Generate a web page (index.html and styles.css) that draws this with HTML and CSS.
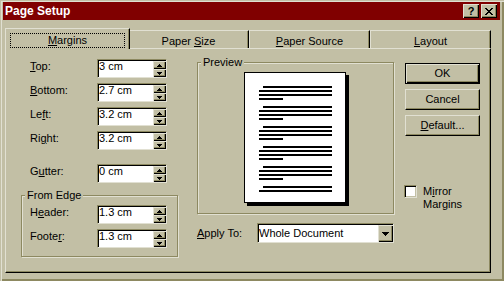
FILE: index.html
```html
<!DOCTYPE html>
<html lang="en">
<head>
  <meta charset="UTF-8" />
  <meta name="viewport" content="width=device-width, initial-scale=1.0" />
  <title>Page Setup</title>
  <link rel="stylesheet" href="styles.css">
</head>
<body>
  <div class="window">
    <div class="titlebar">
      <span class="title">Page Setup</span>
      <button class="cap-btn">?</button>
      <button class="cap-btn">
        <svg width="8" height="7" viewBox="0 0 8 7"><path d="M0 0h2v1H0zM6 0h2v1H6zM1 1h2v1H1zM5 1h2v1H5zM2 2h4v1H2zM3 3h2v1H3zM2 4h4v1H2zM1 5h2v1H1zM5 5h2v1H5zM0 6h2v1H0zM6 6h2v1H6z"/></svg>
      </button>
    </div>

    <div class="tabs">
      <div class="tab active"><span class="focus"><u>M</u>argins</span></div>
      <div class="tab">Paper <u>S</u>ize</div>
      <div class="tab"><u>P</u>aper Source</div>
      <div class="tab"><u>L</u>ayout</div>
    </div>

    <div class="panel">
      <div class="fields">
        <div class="row">
          <label><u>T</u>op:</label>
          <div class="field"><span class="value">3 cm</span>
            <div class="spin">
              <span class="spin-btn"><svg width="5" height="3"><path d="M2 0h1v1h1v1h1v1H0V2h1V1h1z"/></svg></span>
              <span class="spin-btn"><svg width="5" height="3"><path d="M0 0h5v1H4v1H3v1H2V2H1V1H0z"/></svg></span>
            </div>
          </div>
        </div>
        <div class="row">
          <label><u>B</u>ottom:</label>
          <div class="field"><span class="value">2.7 cm</span>
            <div class="spin">
              <span class="spin-btn"><svg width="5" height="3"><path d="M2 0h1v1h1v1h1v1H0V2h1V1h1z"/></svg></span>
              <span class="spin-btn"><svg width="5" height="3"><path d="M0 0h5v1H4v1H3v1H2V2H1V1H0z"/></svg></span>
            </div>
          </div>
        </div>
        <div class="row">
          <label>Le<u>f</u>t:</label>
          <div class="field"><span class="value">3.2 cm</span>
            <div class="spin">
              <span class="spin-btn"><svg width="5" height="3"><path d="M2 0h1v1h1v1h1v1H0V2h1V1h1z"/></svg></span>
              <span class="spin-btn"><svg width="5" height="3"><path d="M0 0h5v1H4v1H3v1H2V2H1V1H0z"/></svg></span>
            </div>
          </div>
        </div>
        <div class="row">
          <label>Ri<u>g</u>ht:</label>
          <div class="field"><span class="value">3.2 cm</span>
            <div class="spin">
              <span class="spin-btn"><svg width="5" height="3"><path d="M2 0h1v1h1v1h1v1H0V2h1V1h1z"/></svg></span>
              <span class="spin-btn"><svg width="5" height="3"><path d="M0 0h5v1H4v1H3v1H2V2H1V1H0z"/></svg></span>
            </div>
          </div>
        </div>
        <div class="row gutter">
          <label>G<u>u</u>tter:</label>
          <div class="field"><span class="value">0 cm</span>
            <div class="spin">
              <span class="spin-btn"><svg width="5" height="3"><path d="M2 0h1v1h1v1h1v1H0V2h1V1h1z"/></svg></span>
              <span class="spin-btn"><svg width="5" height="3"><path d="M0 0h5v1H4v1H3v1H2V2H1V1H0z"/></svg></span>
            </div>
          </div>
        </div>

        <fieldset class="group edge">
          <legend>From Edge</legend>
          <div class="row">
            <label>H<u>e</u>ader:</label>
            <div class="field"><span class="value">1.3 cm</span>
              <div class="spin">
                <span class="spin-btn"><svg width="5" height="3"><path d="M2 0h1v1h1v1h1v1H0V2h1V1h1z"/></svg></span>
                <span class="spin-btn"><svg width="5" height="3"><path d="M0 0h5v1H4v1H3v1H2V2H1V1H0z"/></svg></span>
              </div>
            </div>
          </div>
          <div class="row">
            <label>Foote<u>r</u>:</label>
            <div class="field"><span class="value">1.3 cm</span>
              <div class="spin">
                <span class="spin-btn"><svg width="5" height="3"><path d="M2 0h1v1h1v1h1v1H0V2h1V1h1z"/></svg></span>
                <span class="spin-btn"><svg width="5" height="3"><path d="M0 0h5v1H4v1H3v1H2V2H1V1H0z"/></svg></span>
              </div>
            </div>
          </div>
        </fieldset>
      </div>

      <div class="preview-col">
        <fieldset class="group preview">
          <legend>Preview</legend>
          <div class="page">
            <div class="para"><i class="ln indent"></i><i class="ln"></i><i class="ln"></i><i class="ln short"></i></div>
            <div class="para"><i class="ln indent"></i><i class="ln"></i><i class="ln"></i><i class="ln short"></i></div>
            <div class="para"><i class="ln indent"></i><i class="ln"></i><i class="ln"></i><i class="ln short"></i></div>
            <div class="para"><i class="ln indent"></i><i class="ln"></i><i class="ln"></i><i class="ln short"></i></div>
            <div class="para"><i class="ln indent"></i><i class="ln"></i><i class="ln"></i><i class="ln short"></i></div>
            <div class="para"><i class="ln indent"></i><i class="ln"></i></div>
          </div>
        </fieldset>
        <div class="apply">
          <label><u>A</u>pply To:</label>
          <div class="combo">
            <span class="value">Whole Document</span>
            <span class="drop"><svg width="7" height="4"><path d="M0 0h7v1H6v1H5v1H4v1H3V3H2V2H1V1H0z"/></svg></span>
          </div>
        </div>
      </div>

      <div class="actions">
        <button class="btn default">OK</button>
        <button class="btn">Cancel</button>
        <button class="btn"><u>D</u>efault...</button>
        <div class="check">
          <span class="box"></span>
          <span>M<u>i</u>rror<br>Margins</span>
        </div>
      </div>
    </div>
  </div>
</body>
</html>
```

FILE: styles.css
```css
* {
  box-sizing: border-box;
}
html, body {
  margin: 0;
  background: #c2bfa5;
}
body {
  font-family: "Liberation Sans", Arial, sans-serif;
  font-size: 11px;
  line-height: 13px;
  color: #000;
}
u {
  text-decoration: underline;
  text-underline-offset: 1px;
}
svg {
  display: block;
  shape-rendering: crispEdges;
}

/* window frame */
.window {
  width: 504px;
  height: 281px;
  padding: 2px 4px 0 3px;
  background: #c2bfa5;
  box-shadow: inset 1px 1px 0 #c2bfa5, inset 2px 2px 0 #e1e0d2, inset -2px -2px 0 #8d8961;
}
.titlebar {
  display: flex;
  align-items: center;
  gap: 2px;
  height: 18px;
  padding: 0 3px 0 2px;
  background: #800000;
}
.title {
  flex: 1;
  color: #fff;
  font-weight: bold;
  font-size: 12px;
  line-height: 18px;
}
.cap-btn {
  display: flex;
  align-items: center;
  justify-content: center;
  width: 16px;
  height: 14px;
  padding: 0;
  border: 0;
  background: #c2bfa5;
  box-shadow: inset 1px 1px 0 #e1e0d2, inset -1px -1px 0 #000, inset -2px -2px 0 #8d8961;
  font: bold 11px/14px "Liberation Sans", Arial, sans-serif;
  color: #000;
}

/* tabs */
.tabs {
  position: relative;
  z-index: 1;
  display: flex;
  align-items: flex-end;
  height: 20px;
  margin: 8px 0 0 2px;
  padding-left: 2px;
}
.tab {
  flex: none;
  width: 121px;
  height: 18px;
  padding-top: 4px;
  text-align: center;
  white-space: nowrap;
  border-top: 1px solid #e1e0d2;
  border-left: 1px solid #e1e0d2;
  border-right: 1px solid #000;
  box-shadow: inset -1px 0 0 #8d8961;
}
.tab.active {
  position: relative;
  z-index: 2;
  width: 125px;
  height: 21px;
  margin: 0 -2px -1px;
  background: #c2bfa5;
}
.focus {
  display: block;
  margin: 0 4px;
  border: 1px dotted #000;
}

.panel {
  display: flex;
  align-items: flex-start;
  width: 486px;
  height: 225px;
  margin-left: 2px;
  padding: 7px 0 0 15px;
  border-top: 1px solid #e1e0d2;
  border-left: 1px solid #e1e0d2;
  border-right: 1px solid #000;
  border-bottom: 1px solid #000;
  box-shadow: inset -1px -1px 0 #8d8961;
}

/* margin fields */
.fields {
  display: flex;
  flex-direction: column;
  gap: 5px;
  width: 157px;
  margin-top: 3px;
}
.row {
  display: flex;
  height: 19px;
}
.row label {
  width: 67px;
  margin-left: 9px;
  padding-top: 1px;
  white-space: nowrap;
}
.row.gutter {
  margin-top: 9px;
}
.field {
  display: flex;
  width: 70px;
  height: 19px;
  background: #fff;
  border: 1px solid;
  border-color: #8d8961 #e1e0d2 #e1e0d2 #8d8961;
  box-shadow: inset 1px 1px 0 #000;
}
.value {
  flex: 1;
  padding-left: 1px;
  white-space: nowrap;
}
.spin {
  display: flex;
  flex-direction: column;
  width: 13px;
  margin-top: 1px;
}
.spin-btn {
  display: flex;
  align-items: center;
  justify-content: center;
  height: 8px;
  background: #c2bfa5;
  box-shadow: inset 1px 1px 0 #e1e0d2, inset -1px -1px 0 #000, inset -2px -2px 0 #8d8961;
}

/* group boxes */
.group {
  margin: 0;
  padding: 0;
  min-width: 0;
  border: 1px solid #8d8961;
  box-shadow: inset 1px 1px 0 #e1e0d2, 1px 1px 0 #e1e0d2;
}
.group legend {
  margin-left: 3px;
  padding: 0 2px;
  line-height: 13px;
  background: #c2bfa5;
}
.edge {
  display: flex;
  flex-direction: column;
  gap: 5px;
  margin-top: 1px;
  padding: 3px 0 8px;
}
.edge .row label {
  margin-left: 8px;
}

/* preview */
.preview-col {
  width: 197px;
  margin-left: 19px;
}
.preview {
  padding: 3px 0 10px;
}
.page {
  display: flex;
  flex-direction: column;
  gap: 6px;
  width: 102px;
  height: 131px;
  margin-left: 46px;
  padding: 13px 13px 0 14px;
  background: #fff;
  border: 1px solid #000;
  box-shadow: 3px 3px 0 #000;
}
.para {
  display: flex;
  flex-direction: column;
  gap: 2px;
}
.ln {
  display: block;
  height: 2px;
  background: #000;
}
.ln.indent {
  margin-left: 4px;
}
.ln.short {
  width: 24px;
}

.apply {
  display: flex;
  align-items: center;
  margin-top: 9px;
}
.apply label {
  width: 60px;
  white-space: nowrap;
}
.combo {
  display: flex;
  width: 137px;
  height: 20px;
  background: #fff;
  border: 1px solid;
  border-color: #8d8961 #e1e0d2 #e1e0d2 #8d8961;
  box-shadow: inset 1px 1px 0 #000;
}
.combo .value {
  padding: 3px 0 0 1px;
}
.drop {
  display: flex;
  align-items: center;
  justify-content: center;
  width: 15px;
  margin-top: 1px;
  background: #c2bfa5;
  box-shadow: inset 1px 1px 0 #e1e0d2, inset -1px -1px 0 #000, inset -2px -2px 0 #8d8961;
}

/* buttons */
.actions {
  display: flex;
  flex-direction: column;
  gap: 5px;
  width: 76px;
  margin: 7px 0 0 10px;
}
.btn {
  display: block;
  width: 75px;
  height: 21px;
  margin-left: 1px;
  padding: 0;
  font: inherit;
  color: #000;
  background: #c2bfa5;
  border: 1px solid;
  border-color: #e1e0d2 #000 #000 #e1e0d2;
  box-shadow: inset -1px -1px 0 #8d8961;
}
.btn.default {
  border-color: #000;
  box-shadow: inset 1px 1px 0 #e1e0d2, inset -1px -1px 0 #000, inset -2px -2px 0 #8d8961;
}
.check {
  display: flex;
  align-items: flex-start;
  gap: 6px;
  margin-top: 44px;
  white-space: nowrap;
}
.box {
  flex: none;
  width: 13px;
  height: 13px;
  background: #fff;
  border: 1px solid;
  border-color: #8d8961 #e1e0d2 #e1e0d2 #8d8961;
  box-shadow: inset 1px 1px 0 #000, inset -1px -1px 0 #c2bfa5;
}
```
